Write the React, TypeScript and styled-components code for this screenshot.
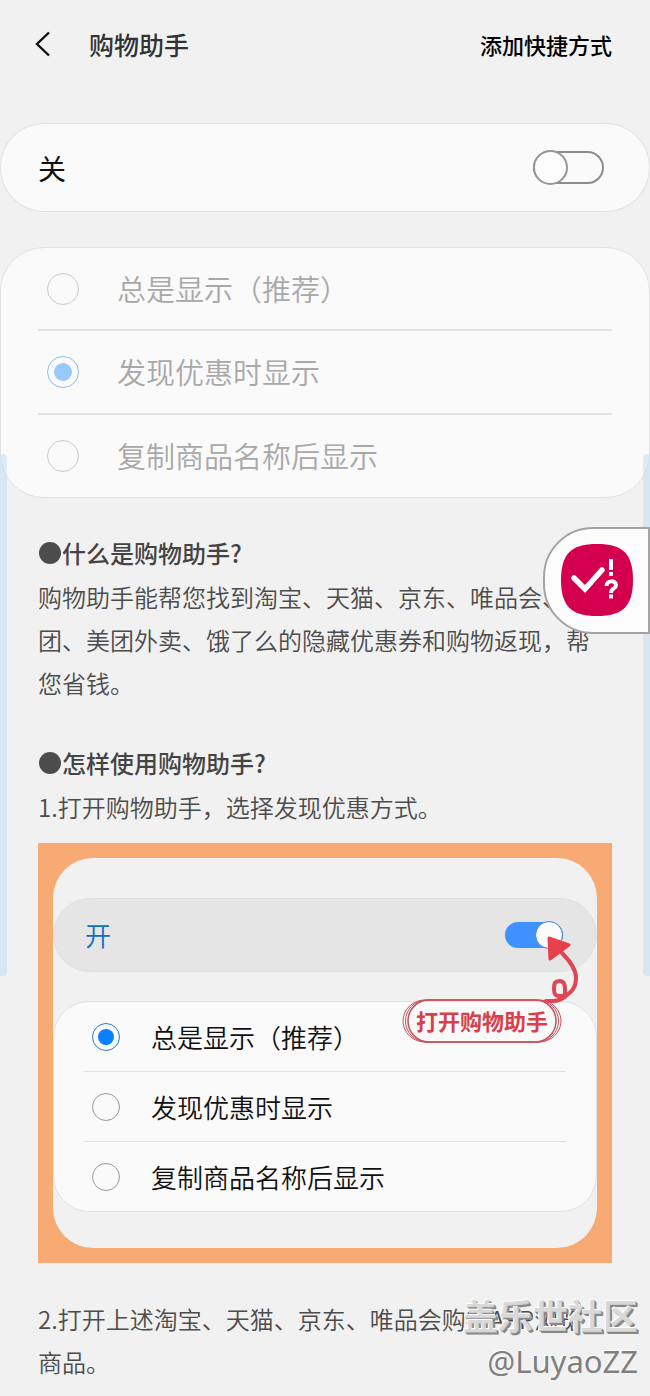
import React from 'react';
import styled, { createGlobalStyle } from 'styled-components';

const cjk = '"Noto Sans CJK SC", "Noto Sans", sans-serif';

const GlobalStyle = createGlobalStyle`
  *, *::before, *::after { box-sizing: border-box; }
  body { margin: 0; background: #f1f1f1; font-family: ${cjk}; }
  h1, h2, p, figure, fieldset { margin: 0; padding: 0; border: 0; min-width: 0; }
`;

const Page = styled.div`
  position: relative;
  overflow: hidden;
  color: #4c4c4c;
`;

const Header = styled.header`
  display: flex;
  align-items: center;
  height: 88px;
  padding: 0 38px 0 32px;
`;

const BackButton = styled.button`
  display: flex;
  padding: 0;
  margin-right: 34px;
  border: 0;
  background: none;
  color: #111;
`;

const Title = styled.h1`
  flex: 1;
  font-size: 25px;
  line-height: 36px;
  font-weight: 500;
  color: #333;
`;

const ShortcutButton = styled.button`
  padding: 0;
  border: 0;
  background: none;
  font: 500 22px/36px ${cjk};
  color: #000;
`;

const Card = styled.div<{ $radius: number; $top: number; $pad?: string; $tone?: string }>`
  margin-top: ${p => p.$top}px;
  padding: ${p => p.$pad ?? '0 38px'};
  border: 1px solid #e0e0e0;
  border-radius: ${p => p.$radius}px;
  background: ${p => p.$tone ?? '#fafafa'};
`;

const SwitchRow = styled.label<{ $height: number; $size: number; $color: string }>`
  display: flex;
  align-items: center;
  justify-content: space-between;
  height: ${p => p.$height}px;
  font-size: ${p => p.$size}px;
  color: ${p => p.$color};
`;

const Switch = styled.input<{ $w: number; $h: number }>`
  appearance: none;
  display: flex;
  align-items: center;
  margin: 0;
  width: ${p => p.$w}px;
  height: ${p => p.$h}px;
  border: 2px solid #8c8c8c;
  border-radius: ${p => p.$h}px;

  &::before {
    content: '';
    flex: none;
    width: ${p => p.$h + 2}px;
    height: ${p => p.$h + 2}px;
    margin-left: -2px;
    border: 2px solid #959595;
    border-radius: 50%;
    background: #fcfcfc;
  }
  &:checked {
    justify-content: flex-end;
    border-color: #3e91ff;
    background: #3e91ff;
  }
  &:checked::before {
    margin: 0 -2px 0 0;
    border: 1px solid #3e82d6;
  }
`;

const Option = styled.label<{ $height: number; $size: number; $gap: number; $inset: number; $line: number; $color: string }>`
  display: flex;
  align-items: center;
  gap: ${p => p.$gap}px;
  height: ${p => p.$height}px;
  padding-left: ${p => p.$inset}px;
  font-size: ${p => p.$size}px;
  font-weight: 350;
  color: ${p => p.$color};

  &:not(:first-of-type) { border-top: ${p => p.$line}px solid #e2e2e2; }
`;

const Radio = styled.input<{ $size: number; $ring: string; $dot: string; $active: string }>`
  appearance: none;
  display: grid;
  place-items: center;
  flex: none;
  margin: 0;
  width: ${p => p.$size}px;
  height: ${p => p.$size}px;
  border: 1px solid ${p => p.$ring};
  border-radius: 50%;

  &:checked { border-color: ${p => p.$active}; }
  &:checked::before {
    content: '';
    width: ${p => Math.floor(p.$size / 4) * 2 + 2}px;
    height: ${p => Math.floor(p.$size / 4) * 2 + 2}px;
    border-radius: 50%;
    background: ${p => p.$dot};
  }
`;

const Label = styled.span`
  padding-bottom: 2px;
`;

const Article = styled.main`
  padding: 33px 38px 12px;
  font-size: 24px;
  line-height: 43px;
  font-weight: 350;
`;

const Section = styled.section`
  & + & { margin-top: 37px; }
`;

const Heading = styled.h2`
  display: flex;
  align-items: center;
  font-size: 24px;
  line-height: 44px;
  font-weight: 500;
  color: #444;
`;

const Bullet = styled.span`
  width: 22px;
  height: 22px;
  margin: 0 1px;
  border-radius: 50%;
  background: #4c4c4c;
`;

const Phrase = styled.span`
  white-space: nowrap;
`;

const Figure = styled.figure`
  margin: 15px 0 34px;
  padding: 15px;
  background: #f7aa73;
`;

const Screen = styled.div`
  position: relative;
  padding: 40px 0 36px;
  border-radius: 40px;
  background: #f1f1f1;
  line-height: 36px;
`;

const Callout = styled.span`
  position: absolute;
  right: 35px;
  top: 141px;
  display: flex;
  justify-content: center;
  width: 160px;
  height: 44px;
  font-size: 22px;
  line-height: 42px;
  color: #d8404c;

  svg { position: absolute; inset: 0; }
  b { position: relative; font-weight: 700; }
`;

const Arrow = styled.svg`
  position: absolute;
  right: 4px;
  top: 75px;
`;

const EdgeHandle = styled.div<{ $side: 'left' | 'right' }>`
  position: absolute;
  top: 454px;
  ${p => p.$side}: 0;
  width: 7px;
  height: 522px;
  border-radius: ${p => (p.$side === 'left' ? '0 4px 4px 0' : '4px 0 0 4px')};
  background: rgba(190, 220, 246, 0.5);
`;

const FloatingButton = styled.button`
  position: absolute;
  top: 527px;
  right: 0;
  display: flex;
  align-items: center;
  width: 107px;
  height: 107px;
  padding: 0 0 2px 15px;
  border: 2px solid #a2a4a6;
  border-radius: 50px 0 0 50px;
  background: #fcfcfc;
`;

const Watermark = styled.div`
  position: absolute;
  right: 12px;
  bottom: 12px;
  text-align: right;
`;

const Community = styled.div`
  font-size: 35px;
  line-height: 48px;
  font-weight: 700;
  color: rgba(212, 212, 212, 0.9);
  text-shadow: -1px -1px 0 #fff, 1px 1px 0 #888, 2px 2px 0 #888;
`;

const Author = styled.div`
  font: 400 31px/44px "Noto Sans", sans-serif;
  color: #808080;
  text-shadow: -1px -1px 0 #fff;
`;

const modes = ['总是显示（推荐）', '发现优惠时显示', '复制商品名称后显示'];

export default function App() {
  return (
    <Page>
      <GlobalStyle />
      <Header>
        <BackButton aria-label="返回">
          <svg width="23" height="26" viewBox="0 0 23 26" fill="none" stroke="currentColor" strokeWidth="2.4">
            <path d="M17 1.500 5 13l12 11.500" />
          </svg>
        </BackButton>
        <Title>购物助手</Title>
        <ShortcutButton>添加快捷方式</ShortcutButton>
      </Header>

      <Card $radius={44} $top={35} $pad="0 45px 0 37px">
        <SwitchRow $height={87} $size={28} $color="#111">
          关
          <Switch type="checkbox" role="switch" $w={71} $h={33} />
        </SwitchRow>
      </Card>

      <Card as="fieldset" $radius={44} $top={35} $pad="0 37px">
        {modes.map((mode, i) => (
          <Option key={mode} $height={i ? 84 : 81} $size={29} $gap={38} $inset={9} $line={2} $color="#a8a8a8">
            <Radio type="radio" name="mode" defaultChecked={i === 1} $size={32} $ring="#cacaca" $dot="#99c8fb" $active="#8dbcee" />
            <Label>{mode}</Label>
          </Option>
        ))}
      </Card>

      <Article>
        <Section>
          <Heading><Bullet />什么是购物助手?</Heading>
          <p>购物助手能帮您找到淘宝、天猫、京东、唯品会、美团、美团外卖、饿了么的隐藏优惠券和购物返现，帮您省钱。</p>
        </Section>
        <Section>
          <Heading><Bullet />怎样使用购物助手?</Heading>
          <p>1.打开购物助手，选择发现优惠方式。</p>
          <Figure>
            <Screen>
              <Card $radius={37} $top={0} $pad="0 33px 0 31px" $tone="#e5e5e5">
                <SwitchRow $height={72} $size={26} $color="#0f6fc4">
                  开
                  <Switch type="checkbox" role="switch" defaultChecked $w={58} $h={26} />
                </SwitchRow>
              </Card>
              <Card as="fieldset" $radius={36} $top={29} $pad="0 30px">
                {modes.map((mode, i) => (
                  <Option key={mode} $height={i ? 70 : 69} $size={26} $gap={31} $inset={8} $line={1} $color="#111">
                    <Radio type="radio" name="demo-mode" defaultChecked={i === 0} $size={28} $ring="#999" $dot="#0a80ff" $active="#2a7cc8" />
                    {mode}
                  </Option>
                ))}
              </Card>
              <Callout>
                <svg width="160" height="44" fill="none" stroke="#c9505a">
                  <rect x="1" y="1" width="158" height="42" rx="22" />
                  <rect x="3.500" y="1" width="153" height="42" rx="21" />
                  <rect x="6" y="1" width="148" height="42" rx="21" strokeWidth="1.500" />
                </svg>
                <b>打开购物助手</b>
              </Callout>
              <Arrow width="50" height="72" viewBox="0 0 50 72" fill="none" stroke="#de4555" strokeWidth="4" strokeLinecap="round">
                <path d="M19 20c8 8 14 16 14 25 0 10-5 14-9 17-4 4-9 6-14 6H3" />
                <path d="M22 63h-6c-4 0-5-2-5-7 0-6 1-8 6-8 4 0 5 3 5 8v7" strokeLinejoin="round" />
                <path d="M6 5 26 12 7 26z" fill="#e8404c" stroke="#e8404c" strokeWidth="3" strokeLinejoin="round" />
              </Arrow>
            </Screen>
          </Figure>
          <p>2.打开上述淘宝、天猫、京东、唯品会购物APP浏览<Phrase>商品。</Phrase></p>
        </Section>
      </Article>

      <EdgeHandle $side="left" />
      <EdgeHandle $side="right" />
      <FloatingButton aria-label="购物助手">
        <svg width="74" height="74" viewBox="0 0 74 74" fill="none">
          <path d="M37 1C63 1 73 11 73 37S63 73 37 73 1 63 1 37 11 1 37 1Z" fill="#d4004f" />
          <path d="m14 35 11 11 17-19" stroke="#fff" strokeWidth="5.500" strokeLinecap="round" />
          <path d="M51 16v11M51 29v4M46.500 43c0-6 9.500-6 9.500-1 0 4-5 3-5 8M51 51.500v4" stroke="#fff" strokeWidth="4" />
        </svg>
      </FloatingButton>
      <Watermark>
        <Community>盖乐世社区</Community>
        <Author>@LuyaoZZ</Author>
      </Watermark>
    </Page>
  );
}
